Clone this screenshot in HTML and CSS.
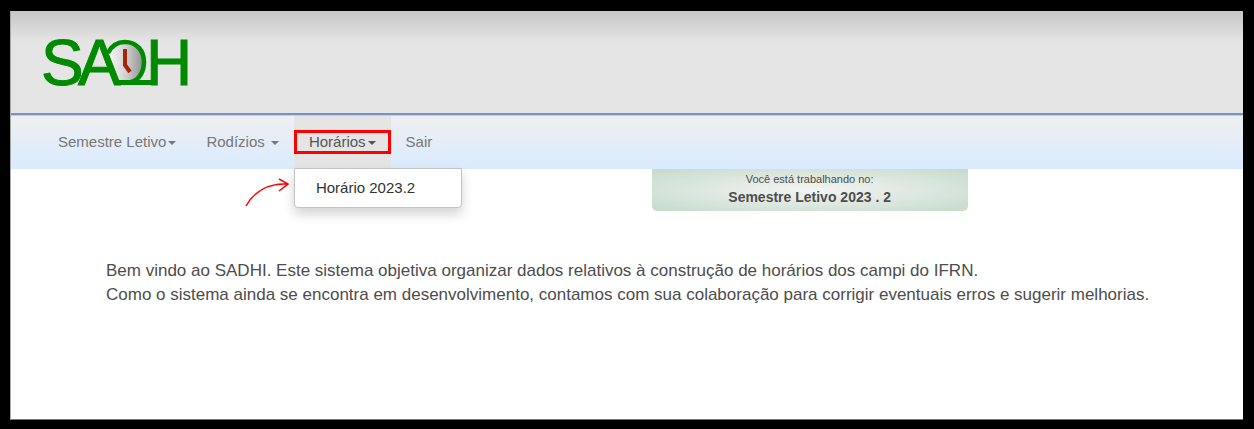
FILE: index.html
```html
<!DOCTYPE html>
<html lang="pt-BR">
<head>
<meta charset="utf-8">
<meta name="viewport" content="width=device-width, initial-scale=1">
<title>SADHI</title>
<link rel="stylesheet" href="styles.css">
</head>
<body>
<div class="page">
  <header class="header">
    <a class="logo" href="#" aria-label="SADH">
      <svg class="logo-image" viewBox="-4 -16 160 80" width="160" height="80">
        <defs>
          <linearGradient id="dial" x1="0" y1="0" x2="1" y2="0">
            <stop offset="0.1" stop-color="#f2f2f2"/>
            <stop offset="0.5" stop-color="#d0d0d0"/>
            <stop offset="1" stop-color="#8e8e8e"/>
          </linearGradient>
        </defs>
        <path d="M66 15C70 7 77 4 83 4C95 4 102 13 102 24C102 35 97 42 90 45H78Z" fill="url(#dial)"/>
        <path d="M66 15C70 7 77 4 83 4C95 4 102 13 102 24C102 34 97 42 89 44" fill="none" stroke="#008a00" stroke-width="4.500"/>
        <path d="M75 44.500H112" fill="none" stroke="#008a00" stroke-width="5"/>
        <path d="M83 11V27L88 34" fill="none" stroke="#a82408" stroke-width="4"/>
        <text class="logo-letters" x="-1 36 104" y="47">SAH</text>
      </svg>
    </a>
  </header>
  <nav class="nav">
    <ul class="menu">
      <li><button class="menu-item" type="button">Semestre Letivo<span class="caret"></span></button></li>
      <li><button class="menu-item" type="button">Rodízios <span class="caret"></span></button></li>
      <li class="dropdown">
        <button class="menu-item menu-item-open" type="button" aria-expanded="true">Horários<span class="caret"></span></button>
        <span class="highlight"></span>
        <ul class="dropdown-menu"><li><a class="dropdown-link" href="#">Horário 2023.2</a></li></ul>
        <svg class="arrow" viewBox="0 0 46 32" width="46" height="32" aria-hidden="true">
          <path d="M1 29C9 15 23 6 42 7M34 2L43 7L34 14"/>
        </svg>
      </li>
      <li><a class="menu-item" href="#">Sair</a></li>
    </ul>
  </nav>
  <main class="main">
    <section class="term">
      <span class="term-label">Você está trabalhando no:</span>
      <strong class="term-value">Semestre Letivo 2023 . 2</strong>
    </section>
    <p class="welcome">Bem vindo ao SADHI. Este sistema objetiva organizar dados relativos à construção de horários dos campi do IFRN.<br>Como o sistema ainda se encontra em desenvolvimento, contamos com sua colaboração para corrigir eventuais erros e sugerir melhorias.</p>
  </main>
</div>
</body>
</html>
```
FILE: styles.css
```css
* { box-sizing: border-box; }
body {
  margin: 0;
  min-height: 100vh;
  display: flex;
  padding: 11px 11px 9px 10px;
  background: #000;
  color: #4d4d4d;
  font-family: "Liberation Sans", Arial, sans-serif;
  font-size: 15px;
}
.page {
  flex: 1;
  border-left: 1px solid #aaa;
  border-bottom: 1px solid #777;
  background: #fff;
}
.header {
  height: 104px;
  padding: 11px 27px 0;
  border-bottom: 2px solid #7892c8;
  background: linear-gradient(#c6c6c6, #e5e5e5 31px);
}
.logo { display: inline-block; }
.logo-image { display: block; }
.logo-letters { font-size: 64px; fill: #008a00; stroke: #008a00; stroke-width: 1px; }
.nav {
  padding: 0 32px;
  border-top: 1px solid #c5d0e4;
  background: linear-gradient(#efefef, #d9ebff);
}
.menu { display: flex; margin: 0; padding: 0; list-style: none; }
.menu-item {
  display: flex;
  align-items: center;
  height: 53px;
  padding: 0 15px 2px;
  border: 0;
  background: none;
  color: #777;
  font: inherit;
  line-height: 20px;
  text-decoration: none;
  white-space: pre;
  cursor: pointer;
}
.menu-item-open { background: #e5e5e5; color: #555; }
.caret {
  margin: 2px 0 0 2px;
  border: 4px solid transparent;
  border-top-color: currentColor;
  border-bottom: 0;
}
.dropdown { position: relative; }
.highlight {
  position: absolute;
  inset: 14px 0 15px;
  border: 3px solid #f00;
  pointer-events: none;
}
.dropdown-menu {
  position: absolute;
  top: 100%;
  left: 0;
  z-index: 1;
  width: 168px;
  margin: -1px 0 0;
  padding: 5px 0;
  border: 1px solid #c4c4c4;
  border-radius: 0 0 4px 4px;
  background: #fff;
  box-shadow: 0 6px 12px rgba(0, 0, 0, 0.18);
  list-style: none;
}
.dropdown-link {
  display: block;
  padding: 3px 21px;
  color: #333;
  line-height: 22px;
  text-decoration: none;
}
.arrow {
  position: absolute;
  top: 61px;
  left: -49px;
  fill: none;
  stroke: #f00;
  stroke-width: 1.500px;
}
.term {
  display: flex;
  flex-direction: column;
  align-items: center;
  width: 316px;
  margin-left: 52%;
  padding: 2px 0 4px;
  border-radius: 0 0 5px 5px;
  background: radial-gradient(ellipse, #f3f5f4, #c6dacb);
}
.term-label { font-size: 11px; line-height: 16px; }
.term-value { font-size: 14px; line-height: 20px; }
.welcome {
  margin: 48px 80px 0 95px;
  font-size: 17px;
  line-height: 24px;
}
```
